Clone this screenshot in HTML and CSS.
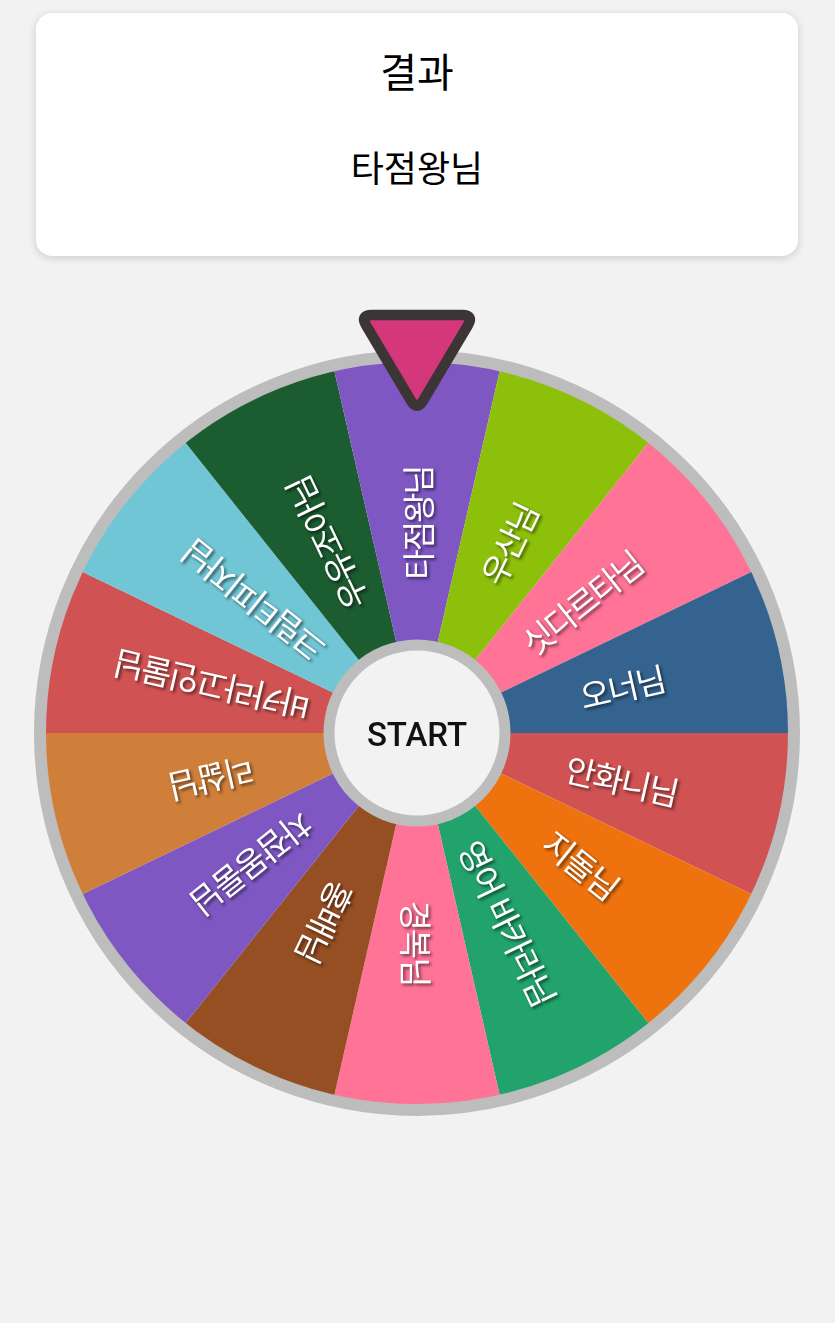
FILE: index.html
```html
<!DOCTYPE html>
<html lang="ko">
<head>
<meta charset="utf-8">
<title>돌림판</title>
<link rel="stylesheet" href="styles.css">
</head>
<body>
<main class="page">
  <section class="result-card">
    <div class="result-title">결과</div>
    <div class="result-name">타점왕님</div>
  </section>
  <div class="wheel-area">
    <svg class="wheel" viewBox="-417 -437 835 840" width="835" height="840" xmlns="http://www.w3.org/2000/svg">
      <g class="slices">
        <path class="s-red" d="M0 0 L375 0 A375 375 0 0 1 337.86 162.71 Z"/>
        <path class="s-orange" d="M0 0 L337.86 162.71 A375 375 0 0 1 233.81 293.19 Z"/>
        <path class="s-green" d="M0 0 L233.81 293.19 A375 375 0 0 1 83.45 365.60 Z"/>
        <path class="s-pink" d="M0 0 L83.45 365.60 A375 375 0 0 1 -83.45 365.60 Z"/>
        <path class="s-brown" d="M0 0 L-83.45 365.60 A375 375 0 0 1 -233.81 293.19 Z"/>
        <path class="s-purple" d="M0 0 L-233.81 293.19 A375 375 0 0 1 -337.86 162.71 Z"/>
        <path class="s-tan" d="M0 0 L-337.86 162.71 A375 375 0 0 1 -375 0 Z"/>
        <path class="s-red" d="M0 0 L-375 0 A375 375 0 0 1 -337.86 -162.71 Z"/>
        <path class="s-sky" d="M0 0 L-337.86 -162.71 A375 375 0 0 1 -233.81 -293.19 Z"/>
        <path class="s-forest" d="M0 0 L-233.81 -293.19 A375 375 0 0 1 -83.45 -365.60 Z"/>
        <path class="s-purple" d="M0 0 L-83.45 -365.60 A375 375 0 0 1 83.45 -365.60 Z"/>
        <path class="s-lime" d="M0 0 L83.45 -365.60 A375 375 0 0 1 233.81 -293.19 Z"/>
        <path class="s-pink" d="M0 0 L233.81 -293.19 A375 375 0 0 1 337.86 -162.71 Z"/>
        <path class="s-navy" d="M0 0 L337.86 -162.71 A375 375 0 0 1 375 0 Z"/>
      </g>
      <circle class="rim" cx="0" cy="0" r="377"/>
      <g class="labels">
        <text transform="rotate(12.857) translate(210 0)">안화니님</text>
        <text transform="rotate(38.571) translate(210 0)">지돌님</text>
        <text transform="rotate(64.286) translate(210 0)">영어 바카라님</text>
        <text transform="rotate(90) translate(210 0)">경복님</text>
        <text transform="rotate(115.714) translate(210 0)">홍배님</text>
        <text transform="rotate(141.429) translate(210 0)">차잠몽룸님</text>
        <text transform="rotate(167.143) translate(210 0)">리삶님</text>
        <text transform="rotate(192.857) translate(210 0)">바카라고인물님</text>
        <text transform="rotate(218.571) translate(210 0)">크림티피자님</text>
        <text transform="rotate(244.286) translate(210 0)">우유조아님</text>
        <text transform="rotate(270) translate(210 0)">타점왕님</text>
        <text transform="rotate(295.714) translate(210 0)">우산님</text>
        <text transform="rotate(321.429) translate(210 0)">싯다르타님</text>
        <text transform="rotate(347.143) translate(210 0)">오너님</text>
      </g>
      <g class="hub">
        <circle class="hub-disc" cx="0" cy="0" r="88"/>
        <text class="hub-label" x="0" y="1">START</text>
      </g>
      <path class="pointer" d="M-45 -418 L45 -418 Q57 -418 50.87 -407.68 L6.13 -332.32 Q0 -322 -6.13 -332.32 L-50.87 -407.68 Q-57 -418 -45 -418 Z"/>
    </svg>
  </div>
</main>
</body>
</html>
```
FILE: styles.css
```css
html, body {
  margin: 0;
  padding: 0;
  background: #f2f2f2;
}

.page {
  width: 835px;
  min-height: 1323px;
  font-family: "Noto Sans CJK KR", "Noto Sans", sans-serif;
  color: #111;
}

.result-card {
  margin: 13px 37px 0 36px;
  height: 243px;
  background: #ffffff;
  border-radius: 16px;
  box-shadow: 0 2px 9px rgba(0, 0, 0, 0.16);
  display: flex;
  flex-direction: column;
  align-items: center;
  box-sizing: border-box;
  padding-top: 33px;
}

.result-title {
  font-size: 40px;
  line-height: 48px;
  font-weight: 400;
  color: #000;
}

.result-name {
  margin-top: 48px;
  font-size: 36px;
  line-height: 48px;
  font-weight: 400;
  color: #000;
}

.wheel-area {
  margin-top: 40px;
}

.wheel {
  display: block;
}

.s-red { fill: #d05252; }
.s-orange { fill: #ee730e; }
.s-green { fill: #22a36b; }
.s-pink { fill: #fe7396; }
.s-brown { fill: #964e23; }
.s-purple { fill: #7e57c2; }
.s-tan { fill: #cf7f3a; }
.s-sky { fill: #71c6d6; }
.s-forest { fill: #1b5c31; }
.s-lime { fill: #8dc00b; }
.s-navy { fill: #35638f; }

.rim {
  fill: none;
  stroke: #bdbdbd;
  stroke-width: 12;
}

.labels {
  filter: drop-shadow(2px 2px 1.5px rgba(0, 0, 0, 0.55));
}

.labels text {
  fill: #ffffff;
  font-family: "Noto Sans CJK KR", "Noto Sans", sans-serif;
  font-size: 33px;
  letter-spacing: -2px;
  text-anchor: middle;
  dominant-baseline: central;
}

.hub-disc {
  fill: #f2f2f2;
  stroke: #bdbdbd;
  stroke-width: 11;
}

.hub-label {
  fill: #111111;
  font-family: Roboto, "Liberation Sans", sans-serif;
  font-weight: 500;
  font-size: 33px;
  text-anchor: middle;
  dominant-baseline: central;
}

.pointer {
  fill: #d5387a;
  stroke: #3b3536;
  stroke-width: 10.5;
  stroke-linejoin: round;
}
```
